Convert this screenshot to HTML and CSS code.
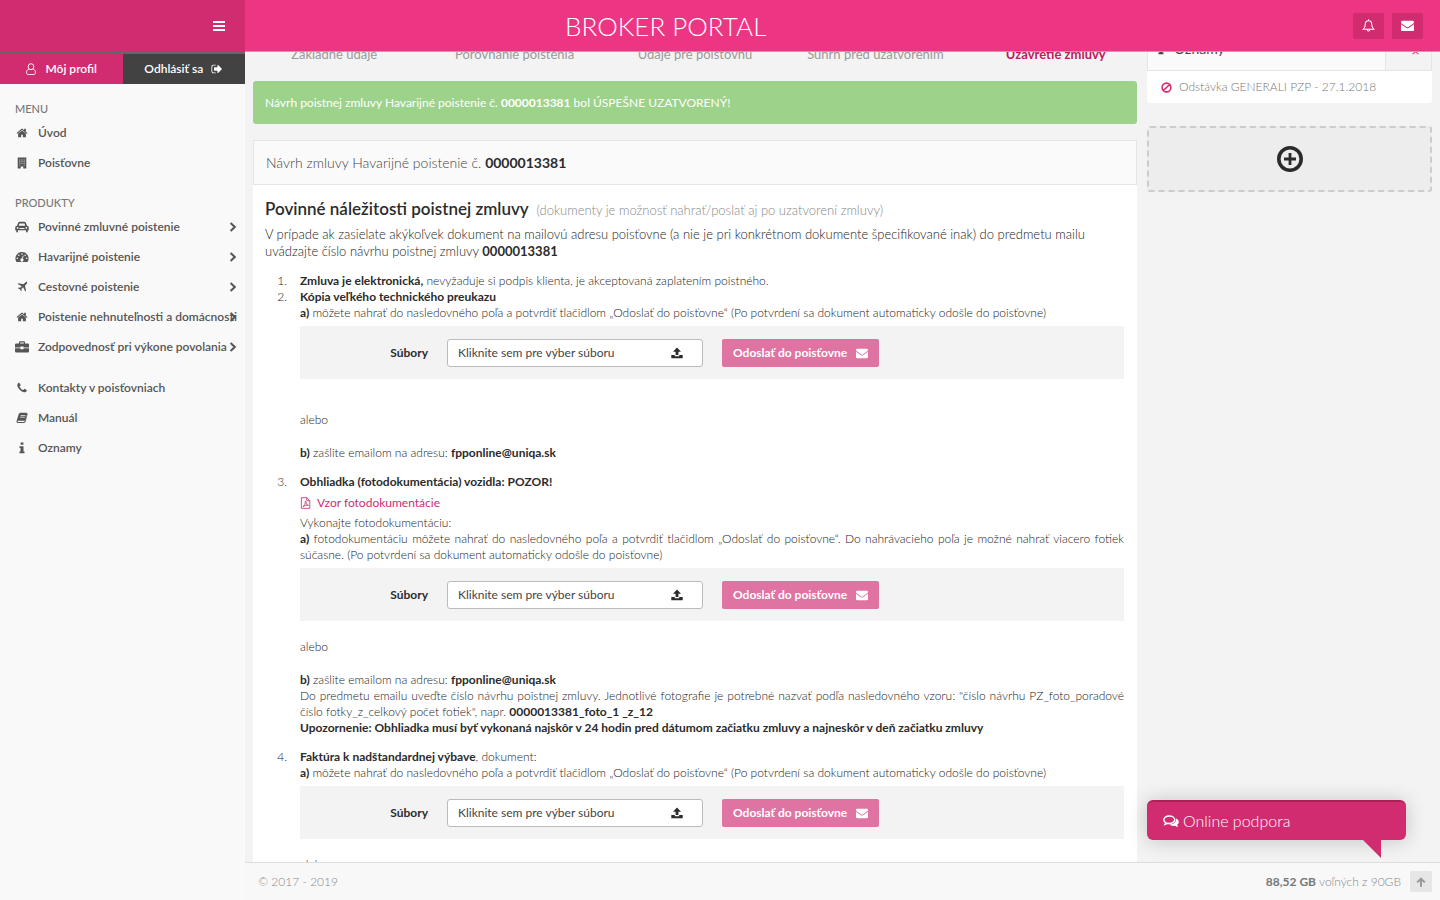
FILE: index.html
```html
<!DOCTYPE html>
<html lang="sk">
<head>
<meta charset="utf-8">
<meta name="viewport" content="width=device-width, initial-scale=1">
<title>Broker portal</title>
<link rel="stylesheet" href="styles.css">
</head>
<body>
<svg class="sprite" aria-hidden="true">
  <symbol id="i-bars" viewBox="0 0 12 10"><path d="M0 0h12v2H0zM0 4h12v2H0zM0 8h12v2H0z"/></symbol>
  <symbol id="i-user" viewBox="0 0 12 14"><path fill="none" stroke="currentColor" stroke-width="1.1" d="M3.4 7.2C1.6 7.6.8 9.2.8 11.400c0 1.200.8 2 1.900 2h6.600c1.100 0 1.900-.8 1.900-2 0-2.200-.8-3.800-2.600-4.200M6 .8a3.300 3.500 0 1 1 0 7 3.300 3.500 0 0 1 0-7z"/></symbol>
  <symbol id="i-signout" viewBox="0 0 1792 1792"><path d="M704 1440q0 4 1 20t.5 26.5-3 23.5-10 19.500-20.500 6.500h-320q-119 0-203.500-84.500t-84.500-203.500v-704q0-119 84.500-203.500t203.500-84.500h320q13 0 22.500 9.500t9.500 22.500q0 4 1 20t.5 26.500-3 23.500-10 19.500-20.500 6.500h-320q-66 0-113 47t-47 113v704q0 66 47 113t113 47h312l11.500 1 11.500 3 8 5.500 7 9 2 13.500zm928-544q0 26-19 45l-544 544q-19 19-45 19t-45-19-19-45v-288h-448q-26 0-45-19t-19-45v-384q0-26 19-45t45-19h448v-288q0-26 19-45t45-19 45 19l544 544q19 19 19 45z"/></symbol>
  <symbol id="i-home" viewBox="0 0 1792 1792"><path d="M1472 992v480q0 26-19 45t-45 19h-384v-384h-256v384h-384q-26 0-45-19t-19-45v-480q0-1 .5-3t.5-3l575-474 575 474q1 2 1 6zm223-69l-62 74q-8 9-21 11h-3q-13 0-21-7l-692-577-692 577q-12 8-24 7-13-2-21-11l-62-74q-8-10-7-23.500t11-21.500l719-599q32-26 76-26t76 26l244 204v-195q0-14 9-23t23-9h192q14 0 23 9t9 23v408l219 182q10 8 11 21.500t-7 23.500z"/></symbol>
  <symbol id="i-building" viewBox="0 0 12 14"><path fill-rule="evenodd" d="M1 .5h10v13H7.500v-2.500h-3v2.500H1zM3 3v1h1V3zm2.500 0v1h1V3zM8 3v1h1V3zM3 5v1h1V5zm2.500 0v1h1V5zM8 5v1h1V5zM3 7v1h1V7zm2.500 0v1h1V7zM8 7v1h1V7zM3 9v1h1V9zm5 0v1h1V9z"/></symbol>
  <symbol id="i-car" viewBox="0 0 14 12"><path fill-rule="evenodd" d="M2 4.700 3.200 1.800Q3.600.8 4.600.8h4.800q1 0 1.400 1L12 4.700q1.800.2 1.800 2v2.600h-1V10.500q0 1-.9 1t-.9-1V9.300H3V10.500q0 1-.9 1t-.9-1V9.300h-1V6.700q0-1.800 1.800-2zM3.700 4.700h6.600L9.500 2.400H4.500zM2.600 6a.9.9 0 1 0 0 1.800.9.9 0 0 0 0-1.800zm8.800 0a.9.9 0 1 0 0 1.800.9.900 0 0 0 0-1.800zM4.500 7v1h5V7z"/></symbol>
  <symbol id="i-gauge" viewBox="0 0 14 12"><path fill-rule="evenodd" d="M7 1a6.500 6.500 0 0 1 5.500 10h-11A6.500 6.500 0 0 1 7 1zM7 2.200a.8.8 0 1 0 0 1.600.8.8 0 0 0 0-1.600zM3.800 3.500a.8.8 0 1 0 0 1.600.8.8 0 0 0 0-1.600zM10.200 3.500a.8.8 0 1 0 0 1.600.8.8 0 0 0 0-1.600zM2.300 6.500a.8.8 0 1 0 0 1.600.8.8 0 0 0 0-1.600zm9.400 0a.8.8 0 1 0 0 1.600.8.8 0 0 0 0-1.600zM8 4.500 6.800 7.600a1.500 1.500 0 1 0 .9.200L8.700 4.700z"/></symbol>
  <symbol id="i-plane" viewBox="0 0 14 14"><path d="M12.800 1.200c.6.6.1 1.700-.6 2.400L10.400 5.400l1.300 6-.9.8-2.500-4.800-2 2 .3 1.900-.7.700-1.300-2.300L2.200 8.400l.7-.7 1.900.3 2-2L2 3.400l.9-.9 6 1.300 1.700-1.900c.7-.7 1.700-1.200 2.200-.7z"/></symbol>
  <symbol id="i-briefcase" viewBox="0 0 14 12"><path fill-rule="evenodd" d="M4 2.500V1.200Q4 .3 4.900.3h4.200q.9 0 .9.900v1.300h2.800q1.200 0 1.200 1.200V6.500H8.500V5.500h-3v1H0V3.700Q0 2.500 1.200 2.500zm1.100 0h3.800V1.400H5.100zM0 7.300h5.500v1h3v-1H14v3q0 1.200-1.200 1.200H1.200Q0 11.500 0 10.300z"/></symbol>
  <symbol id="i-phone" viewBox="0 0 1792 1792"><path d="M1600 1240q0 27-10 70.500t-21 68.500q-21 50-122 106-94 51-186 51-27 0-52.500-3.500t-57.500-12.500-47.500-14.500-55.500-20.500-49-18q-98-35-175-83-128-79-264.500-215.500t-215.500-264.500q-48-77-83-175-3-9-18-49t-20.500-55.500-14.500-47.500-12.500-57.500-3.500-52.500q0-92 51-186 56-101 106-122 25-11 68.500-21t70.500-10q14 0 21 3 18 6 53 76 11 19 30 54t35 63.500 31 53.500q3 4 17.500 25t21.500 35.500 7 28.500q0 20-28.500 50t-62 55-62 53-28.500 46q0 9 5 22.500t8.500 20.500 14 24 11.500 19q76 137 174 235t235 174q2 1 19 11.500t24 14 20.500 8.500 22.500 5q18 0 46-28.500t53-62 55-62 50-28.500q14 0 28.500 7t35.500 21.500 25 17.500q25 15 53.500 31t63.500 35 54 30q70 35 76 53 3 7 3 21z"/></symbol>
  <symbol id="i-book" viewBox="0 0 14 14"><path fill-rule="evenodd" d="M5.200 1h7q1.500.2 1.200 1.600L11.300 11q-.5 1.700-2 1.700H2Q.3 12.500.6 10.800L3 3Q3.600 1 5.200 1zM5.500 3.600 5.200 4.500h5.500l.3-.9zM4.900 5.600l-.3.900h5.500l.3-.9zM2 10.200q-.6 1.400.5 1.400h6.700q.6 0 .9-.8l2-7.300.3-.1-2.100 6.800z"/></symbol>
  <symbol id="i-info" viewBox="0 0 6 12"><path d="M1.600.5h2.800v2.300H1.600zM.5 4.200h4v5.300h1v1.800h-5V9.500h1V6h-1z"/></symbol>
  <symbol id="i-chevron" viewBox="0 0 8 10"><path fill="none" stroke="currentColor" stroke-width="2" d="M1.600 1 5.800 5 1.600 9"/></symbol>
  <symbol id="i-bell" viewBox="0 0 14 14"><path fill="none" stroke="currentColor" stroke-width="1.100" d="M7 .3v1.500M1.400 11Q3.500 9 3.500 5.600 3.600 1.800 7 1.800t3.500 3.800Q10.500 9 12.600 11zM5.700 11.500q.1 1.500 1.300 1.500t1.300-1.500"/></symbol>
  <symbol id="i-mail" viewBox="0 0 1792 1792"><path d="M1792 710v794q0 66-47 113t-113 47h-1472q-66 0-113-47t-47-113v-794q44 49 101 87 362 246 497 345 57 42 92.500 65.500t94.500 48 110 24.500h2q51 0 110-24.500t94.500-48 92.500-65.500q170-123 498-345 57-39 100-87zm0-294q0 79-49 151t-122 123q-376 261-468 325-10 7-42.500 31t-54 38.500-52 32.500-57.500 27-50 9h-2q-23 0-50-9t-57.500-27-52-32.500-54-38.500-42.500-31q-91-64-262-182.500t-205-142.500q-62-42-117-115.500t-55-136.500q0-78 41.500-130t118.500-52h1472q65 0 112.500 47t47.500 113z"/></symbol>
  <symbol id="i-ban" viewBox="0 0 12 12"><path fill="none" stroke="currentColor" stroke-width="1.700" d="M6 1.200a4.800 4.800 0 1 0 0 9.600 4.800 4.800 0 0 0 0-9.600zM9.300 2.700 2.700 9.300"/></symbol>
  <symbol id="i-plus" viewBox="0 0 26 26"><path fill="none" stroke="currentColor" stroke-width="3.600" d="M13 1.800a11.200 11.200 0 1 0 0 22.400 11.200 11.200 0 0 0 0-22.400z"/><path d="M11.600 7h2.800v4.600H19v2.800h-4.600V19h-2.800v-4.600H7v-2.800h4.600z"/></symbol>
  <symbol id="i-upload" viewBox="0 0 12 12"><path d="M6 .5 10 4.700H7.400V8H4.600V4.700H2zM.3 8h3.500v1.200h4.400V8h3.500v3.200H.3z"/></symbol>
  <symbol id="i-pdf" viewBox="0 0 12 14"><path fill="none" stroke="currentColor" d="M1.200.8h6.300L11 4.200v9H1.200zM7.500.8v3.500H11M3 11.300c2-1.200 3-3.500 2.700-5.800 0-.8 1-.7.900.1-.3 2.400 1 3.700 2.900 4.100-1.900-.5-4.500.2-6.500 1.600z"/></symbol>
  <symbol id="i-chat" viewBox="0 0 16 13"><path fill="none" stroke="currentColor" stroke-width="1.400" d="M6.200 1C3.200 1 .8 2.600.8 4.700c0 1.200.8 2.200 2 2.900L2 9.400l2.600-1.100c3.900.6 7.100-1.100 7.100-3.600C11.700 2.600 9.200 1 6.200 1z"/><path d="M12.800 3.600c1.800.6 3 1.900 3 3.400 0 1.100-.6 2.100-1.700 2.800l1 2.500-3.500-1.500c-2.100.3-4-.2-5.200-1.300 3.600.2 7.300-2 6.400-5.900z"/></symbol>
  <symbol id="i-up" viewBox="0 0 10 10"><path fill="none" stroke="currentColor" stroke-width="2" d="M5 9.700V1.800M1.200 5.400 5 1.700l3.800 3.700"/></symbol>
</svg>

<div class="app">
  <aside class="sidebar">
    <div class="brand"><button class="bare" type="button" aria-label="Menu"><svg class="ico-bars"><use href="#i-bars"/></svg></button></div>
    <div class="account">
      <a class="account-link profile" href="#"><svg class="ico"><use href="#i-user"/></svg>Môj profil</a>
      <a class="account-link logout" href="#">Odhlásiť sa<svg class="ico"><use href="#i-signout"/></svg></a>
    </div>
    <nav class="nav">
      <h2 class="nav-title">MENU</h2>
      <a class="nav-link" href="#"><svg class="ico"><use href="#i-home"/></svg><span>Úvod</span></a>
      <a class="nav-link" href="#"><svg class="ico"><use href="#i-building"/></svg><span>Poisťovne</span></a>
      <h2 class="nav-title products">PRODUKTY</h2>
      <a class="nav-link" href="#"><svg class="ico"><use href="#i-car"/></svg><span>Povinné zmluvné poistenie</span><svg class="chev"><use href="#i-chevron"/></svg></a>
      <a class="nav-link" href="#"><svg class="ico"><use href="#i-gauge"/></svg><span>Havarijné poistenie</span><svg class="chev"><use href="#i-chevron"/></svg></a>
      <a class="nav-link" href="#"><svg class="ico"><use href="#i-plane"/></svg><span>Cestovné poistenie</span><svg class="chev"><use href="#i-chevron"/></svg></a>
      <a class="nav-link" href="#"><svg class="ico"><use href="#i-home"/></svg><span>Poistenie nehnuteľnosti a domácnosti</span><svg class="chev"><use href="#i-chevron"/></svg></a>
      <a class="nav-link" href="#"><svg class="ico"><use href="#i-briefcase"/></svg><span>Zodpovednosť pri výkone povolania</span><svg class="chev"><use href="#i-chevron"/></svg></a>
      <div class="nav-extra">
        <a class="nav-link" href="#"><svg class="ico"><use href="#i-phone"/></svg><span>Kontakty v poisťovniach</span></a>
        <a class="nav-link" href="#"><svg class="ico"><use href="#i-book"/></svg><span>Manuál</span></a>
        <a class="nav-link" href="#"><svg class="ico"><use href="#i-info"/></svg><span>Oznamy</span></a>
      </div>
    </nav>
  </aside>

  <div class="page">
    <header class="topbar">
      <h1 class="title">BROKER PORTAL</h1>
      <div class="topbar-actions">
        <button class="square" type="button" aria-label="Upozornenia"><svg class="ico"><use href="#i-bell"/></svg></button>
        <button class="square" type="button" aria-label="Správy"><svg class="ico"><use href="#i-mail"/></svg></button>
      </div>
    </header>

    <div class="content">
      <main class="main">
        <div class="steps">
          <span>Základné údaje</span><span>Porovnanie poistenia</span><span>Údaje pre poisťovňu</span><span>Súhrn pred uzatvorením</span><span class="current">Uzavretie zmluvy</span>
        </div>
        <div class="alert">Návrh poistnej zmluvy Havarijné poistenie č. <b>0000013381</b> bol ÚSPEŠNE UZATVORENÝ!</div>
        <section class="panel">
          <div class="panel-head">Návrh zmluvy Havarijné poistenie č. <b>0000013381</b></div>
          <div class="panel-body">
            <h3 class="heading">Povinné náležitosti poistnej zmluvy <small>(dokumenty je možnosť nahrať/poslať aj po uzatvorení zmluvy)</small></h3>
            <p class="intro">V prípade ak zasielate akýkoľvek dokument na mailovú adresu poisťovne (a nie je pri konkrétnom dokumente špecifikované inak) do predmetu mailu uvádzajte číslo návrhu poistnej zmluvy <b>0000013381</b></p>
            <ol class="docs">
              <li class="doc"><div><p><b>Zmluva je elektronická,</b> nevyžaduje si podpis klienta, je akceptovaná zaplatením poistného.</p></div></li>
              <li class="doc"><div>
                <p><b>Kópia veľkého technického preukazu</b></p>
                <p><b>a)</b> môžete nahrať do nasledovného poľa a potvrdiť tlačidlom „Odoslať do poisťovne“ (Po potvrdení sa dokument automaticky odošle do poisťovne)</p>
                <form class="upload">
                  <label class="upload-label" for="file-2">Súbory</label>
                  <div class="picker"><input class="file" id="file-2" type="file"><span>Kliknite sem pre výber súboru</span><svg class="ico"><use href="#i-upload"/></svg></div>
                  <button class="send" type="button">Odoslať do poisťovne<svg class="ico"><use href="#i-mail"/></svg></button>
                </form>
                <p class="or far">alebo</p>
                <p class="mail"><b>b)</b> zašlite emailom na adresu: <b>fpponline@uniqa.sk</b></p>
              </div></li>
              <li class="doc spaced"><div>
                <p><b>Obhliadka (fotodokumentácia) vozidla: POZOR!</b></p>
                <p class="sample"><a class="sample-link" href="#"><svg class="ico"><use href="#i-pdf"/></svg>Vzor fotodokumentácie</a></p>
                <p>Vykonajte fotodokumentáciu:</p>
                <p><b>a)</b> fotodokumentáciu môžete nahrať do nasledovného poľa a potvrdiť tlačidlom „Odoslať do poisťovne“. Do nahrávacieho poľa je možné nahrať viacero fotiek súčasne. (Po potvrdení sa dokument automaticky odošle do poisťovne)</p>
                <form class="upload">
                  <label class="upload-label" for="file-3">Súbory</label>
                  <div class="picker"><input class="file" id="file-3" type="file"><span>Kliknite sem pre výber súboru</span><svg class="ico"><use href="#i-upload"/></svg></div>
                  <button class="send" type="button">Odoslať do poisťovne<svg class="ico"><use href="#i-mail"/></svg></button>
                </form>
                <p class="or">alebo</p>
                <p class="mail"><b>b)</b> zašlite emailom na adresu: <b>fpponline@uniqa.sk</b></p>
                <p>Do predmetu emailu uveďte číslo návrhu poistnej zmluvy. Jednotlivé fotografie je potrebné nazvať podľa nasledovného vzoru: "číslo návrhu PZ_foto_poradové číslo fotky_z_celkový počet fotiek", napr. <b>0000013381_foto_1 _z_12</b></p>
                <p><b>Upozornenie: Obhliadka musí byť vykonaná najskôr v 24 hodin pred dátumom začiatku zmluvy a najneskôr v deň začiatku zmluvy</b></p>
              </div></li>
              <li class="doc spaced"><div>
                <p><b>Faktúra k nadštandardnej výbave</b>, dokument:</p>
                <p><b>a)</b> môžete nahrať do nasledovného poľa a potvrdiť tlačidlom „Odoslať do poisťovne“ (Po potvrdení sa dokument automaticky odošle do poisťovne)</p>
                <form class="upload">
                  <label class="upload-label" for="file-4">Súbory</label>
                  <div class="picker"><input class="file" id="file-4" type="file"><span>Kliknite sem pre výber súboru</span><svg class="ico"><use href="#i-upload"/></svg></div>
                  <button class="send" type="button">Odoslať do poisťovne<svg class="ico"><use href="#i-mail"/></svg></button>
                </form>
                <p class="or">alebo</p>
              </div></li>
            </ol>
          </div>
        </section>
      </main>

      <aside class="side">
        <section class="notices">
          <div class="notices-head"><h2 class="notices-title"><svg class="ico"><use href="#i-info"/></svg>Oznamy</h2><button class="notices-close" type="button" aria-label="Zavrieť">×</button></div>
          <a class="notice" href="#"><svg class="ico"><use href="#i-ban"/></svg>Odstávka GENERALI PZP - 27.1.2018</a>
        </section>
        <button class="add" type="button" aria-label="Pridať"><svg class="ico-plus"><use href="#i-plus"/></svg></button>
      </aside>
    </div>

    <footer class="footer">
      <span>© 2017 - 2019</span>
      <div class="quota"><span><b>88,52 GB</b> voľných z 90GB</span><button class="to-top" type="button" aria-label="Hore"><svg class="ico-up"><use href="#i-up"/></svg></button></div>
    </footer>
  </div>
  <button class="chat" type="button"><svg class="ico-chat"><use href="#i-chat"/></svg>Online podpora</button>
</div>
</body>
</html>
```

FILE: styles.css
```css
* { box-sizing: border-box; }
body {
  margin: 0;
  font-family: Lato, "Noto Sans", sans-serif;
  font-size: 12px;
  line-height: 16px;
  color: #444;
  background: #f3f3f3;
}
h1, h2, h3, p, ol { margin: 0; padding: 0; }
button { font: inherit; border: 0; padding: 0; background: none; cursor: pointer; }
a { text-decoration: none; color: inherit; }
svg { fill: currentColor; flex: none; }
b { color: #2b2b2b; font-weight: 700; }
.sprite { position: absolute; width: 0; height: 0; }
.ico { width: 12px; height: 12px; }

.app { position: relative; display: flex; height: 100vh; overflow: hidden; }

/* sidebar */
.sidebar { flex: none; width: 245px; background: #f9f9f9; }
.brand { height: 52px; padding-right: 20px; display: flex; align-items: center; justify-content: flex-end; background: #d12c6f; color: #fff; }
.bare { display: flex; color: inherit; }
.ico-bars { width: 12px; height: 10px; }
.account { display: flex; border-top: 2px solid #666; }
.account-link { flex: 1; height: 30px; display: flex; align-items: center; justify-content: center; gap: 8px; color: #fff; font-weight: 600; }
.profile { background: #d12c6f; }
.logout { background: #424242; }
.nav { padding: 17px 8px 0 15px; color: #555; }
.nav-title { font-size: 11px; line-height: 16px; font-weight: 500; color: #777; margin-bottom: 1px; }
.products { margin-top: 17px; margin-bottom: 1px; }
.nav-link { display: flex; align-items: center; gap: 9px; height: 30px; font-weight: 600; white-space: nowrap; }
.nav-link .ico { width: 14px; height: 12px; }
.nav-link span { flex: 1; min-width: 0; }
.nav-link .chev { width: 8px; height: 10px; margin-left: -9px; }
.nav-extra { margin-top: 11px; }

/* page frame */
.page { flex: 1; min-width: 0; display: flex; flex-direction: column; }
.topbar { position: relative; z-index: 1; flex: none; height: 52px; padding-right: 17px; display: grid; grid-template-columns: 5fr 2fr; align-items: center; background: #ec3683; border-bottom: 1px solid #e58bb0; color: #fff; }
.title { text-align: center; font-size: 26px; line-height: 32px; font-weight: 300; }
.topbar-actions { display: flex; justify-content: flex-end; gap: 8px; }
.square { width: 31px; height: 26px; display: grid; place-items: center; border-radius: 2px; background: #d12c6f; color: #fff; }
.square .ico { width: 13px; height: 13px; }
.content { flex: 1; min-height: 0; overflow: hidden; padding: 0 8px; display: grid; grid-template-columns: 1fr 285px; gap: 10px; align-items: start; }
.steps { height: 40px; margin: -11px -9px 0; display: grid; grid-template-columns: repeat(5, 1fr); text-align: center; font-size: 13px; line-height: 27px; color: #999; }
.steps span { white-space: nowrap; }
.steps .current { color: #c2185b; font-weight: 700; }
.alert { padding: 13px 12px; border-radius: 3px; background: #9cd28a; color: #fff; line-height: 17px; }
.alert b { color: #fff; }

/* contract panel */
.panel { margin-top: 16px; background: #fff; }
.panel-head { padding: 12px; border: 1px solid #e5e5e5; background: #fafafa; font-size: 14px; font-weight: 300; line-height: 19px; }
.panel-body { padding: 13px 13px 30px 12px; }
.heading { font-size: 17px; line-height: 22px; font-weight: 600; color: #2b2b2b; }
.heading small { margin-left: 4px; font-size: 13px; font-weight: 300; color: #888; }
.intro { margin-top: 5px; font-size: 13px; line-height: 17px; font-weight: 300; color: #222; }
.docs { margin-top: 13px; list-style: none; counter-reset: doc; font-weight: 300; color: #222; }
.doc { counter-increment: doc; display: grid; grid-template-columns: 22px 1fr; gap: 13px; text-align: justify; }
.doc::before { content: counter(doc) "."; text-align: right; }
.spaced { margin-top: 13px; }
.upload { margin-top: 5px; height: 53px; padding-left: 82px; display: flex; align-items: center; background: #f3f3f3; color: #2b2b2b; text-align: left; }
.upload-label { width: 46px; text-align: right; font-weight: 700; }
.picker { position: relative; width: 256px; height: 28px; margin: 0 19px; padding: 0 19px 0 10px; display: flex; align-items: center; justify-content: space-between; border: 1px solid #bbb; border-radius: 3px; background: #fff; font-weight: 400; }
.picker span { color: #444; }
.file { position: absolute; inset: 0; width: 100%; opacity: 0; }
.send { height: 28px; padding: 0 11px; display: flex; align-items: center; gap: 9px; border-radius: 2px; background: #df74a2; color: #fff; font-weight: 700; }
.or { margin-top: 18px; }
.or.far { margin-top: 33px; }
.mail { margin-top: 17px; }
.sample { margin: 5px 0 4px; }
.sample-link { display: flex; align-items: center; gap: 6px; color: #d12c6f; font-weight: 400; }
.sample-link .ico { width: 11px; }

/* right column */
.notices-head { height: 41px; margin-top: -22px; display: flex; border: 1px solid #e5e5e5; background: #fafafa; }
.notices-title { flex: 1; padding: 8px 10px; display: flex; gap: 10px; align-items: center; font-size: 14px; font-weight: 400; line-height: 20px; height: 36px; }
.notices-title .ico { width: 6px; }
.notices-close { width: 46px; padding: 8px 0 8px 14px; border-left: 1px solid #e5e5e5; background: #f3f3f3; color: #d12c6f; font-size: 14px; line-height: 20px; }
.notice { height: 32px; padding: 0 14px; display: flex; align-items: center; gap: 7px; border-radius: 0 0 3px 3px; background: #fff; color: #777; font-weight: 300; }
.notice .ico { width: 11px; height: 11px; color: #d12c6f; }
.add { width: 100%; height: 66px; margin-top: 23px; display: grid; place-items: center; border: 2px dashed #ccc; border-radius: 3px; background: #ededed; color: #2b2b2b; }
.ico-plus { width: 26px; height: 26px; }

.footer { flex: none; height: 38px; padding: 0 8px 0 13px; display: flex; align-items: center; justify-content: space-between; border-top: 1px solid #ddd; background: #f8f8f8; color: #888; font-weight: 300; }
.footer b { color: #777; }
.quota { display: flex; align-items: center; gap: 9px; }
.to-top { width: 22px; height: 21px; display: grid; place-items: center; border-radius: 2px; background: #e6e6e6; color: #999; }
.ico-up { width: 10px; height: 10px; }

/* chat bubble */
.chat { position: absolute; z-index: 2; right: 34px; bottom: 60px; width: 259px; height: 40px; padding: 0 16px; display: flex; align-items: center; gap: 4px; border-top: 2px solid #ae2158; border-radius: 6px; background: #d12c6f; color: #fff; font-size: 16px; font-weight: 300; box-shadow: 0 1px 20px rgba(0, 0, 0, .2); }
.chat::after { content: ""; position: absolute; right: 25px; top: 100%; width: 18px; height: 18px; background: #d12c6f; clip-path: polygon(0 0, 100% 0, 100% 100%); }
.ico-chat { width: 16px; height: 13px; }
```
